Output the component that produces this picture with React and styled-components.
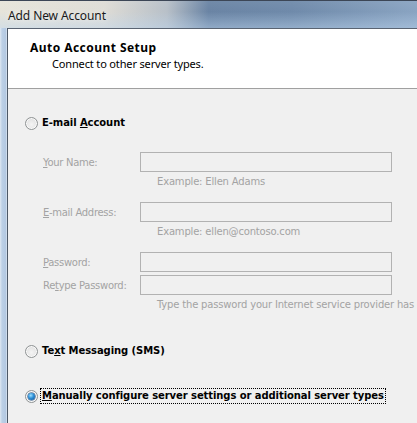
import React from "react";
import styled, { createGlobalStyle } from "styled-components";

const Global = createGlobalStyle`
  html, body { margin: 0; padding: 0; background: #f0f0f0; }
  body { width: 417px; height: 423px; overflow: hidden; }
`;

const Window = styled.div`
  width: 417px;
  height: 423px;
  display: flex;
  flex-direction: column;
  overflow: hidden;
`;

const TitleBar = styled.div`
  height: 28px;
  box-sizing: border-box;
  padding: 2px 0 0 8px;
  display: flex;
  align-items: center;
  font-family: "Segoe UI", "Noto Sans", "Open Sans", sans-serif;
  font-size: 12px;
  letter-spacing: -0.1px;
  color: #1a1a1a;
  border-top: 1px solid #3c4656;
  background:
    linear-gradient(to bottom, rgba(255,255,255,0.05) 0%, rgba(255,255,255,0) 40%, rgba(190,215,240,0.45) 100%),
    linear-gradient(to right, #e6e4da 0%, #dedcd6 25%, #b8c0c8 40%, #6a84a4 50%, #6f8aaa 70%, #8aa4c2 100%);
  text-shadow: 0 0 6px rgba(255,255,255,0.9);
`;

const Body = styled.div`
  flex: 1;
  display: flex;
  min-height: 0;
`;

const Frame = styled.div`
  width: 7px;
  border-right: 1px solid #4d5866;
  background: linear-gradient(to right, #dfe8f2 0%, #bcd0e6 30%, #b4c9e2 80%, #dbe6f2 100%);
`;

const Content = styled.div`
  flex: 1;
  display: flex;
  flex-direction: column;
  min-width: 0;
  background: #f0f0f0;
`;

const Header = styled.div`
  height: 61px;
  box-sizing: border-box;
  background: #fff;
  border-top: 1px solid #5a6472;
  border-bottom: 1px solid #a0a0a0;
  padding: 11px 0 0 22px;
  font-family: "Segoe UI", "Noto Sans", "Open Sans", sans-serif;
  color: #000;
`;

const HeaderTitle = styled.div`
  font-weight: bold;
  font-size: 12px;
  letter-spacing: 0.45px;
  line-height: 16px;
`;

const HeaderSub = styled.div`
  padding-left: 22px;
  font-size: 11px;
  letter-spacing: -0.15px;
  line-height: 15px;
`;

const Form = styled.div`
  padding: 26px 0 0 17px;
  font-family: "DejaVu Sans", Verdana, sans-serif;
  font-size: 10px;
`;

const RadioRow = styled.div`
  display: flex;
  align-items: center;
  height: 16px;
  margin-top: ${(p) => p.$mt || 0}px;
`;

const RadioCircle = styled.span`
  width: 11px;
  height: 11px;
  border-radius: 50%;
  border: 1px solid #8f9394;
  background: radial-gradient(circle at 50% 60%, #f4f4f4 0%, #e6e6e6 55%, #cfcfcf 100%);
  box-shadow: inset 0 0 0 1px #fafafa;
  display: flex;
  align-items: center;
  justify-content: center;
  flex: none;
  margin: 0 3px 0 0;
`;

const RadioDot = styled.span`
  width: 7px;
  height: 7px;
  border-radius: 50%;
  background: radial-gradient(circle at 40% 35%, #9fe0ff 0%, #2d8fd6 45%, #0d4a8c 100%);
  box-shadow: 0 0 0 0.5px #17477a;
`;

const RadioLabel = styled.span`
  font-weight: bold;
  color: #000;
  line-height: 14px;
  padding: 0 1px;
  letter-spacing: -0.08px;
  outline: ${(p) => (p.$focus ? "1px dotted #000" : "none")};
  outline-offset: 0px;
  white-space: nowrap;
`;

const Fields = styled.div`
  padding-left: 18px;
  margin-top: 21px;
  color: #a3a3a3;
`;

const FieldRow = styled.div`
  display: grid;
  grid-template-columns: 97px 252px;
  align-items: center;
  height: 20px;
  margin-top: ${(p) => p.$mt || 0}px;
`;

const FieldLabel = styled.span`
  color: #a3a3a3;
  letter-spacing: -0.3px;
  white-space: nowrap;
`;

const Input = styled.div`
  height: 20px;
  box-sizing: border-box;
  border: 1px solid #b2b2b2;
  background: #f0f0f0;
`;

const Hint = styled.div`
  margin-top: 3px;
  height: 14px;
  line-height: 14px;
  padding-left: 114px;
  color: #a3a3a3;
  letter-spacing: -0.18px;
  white-space: nowrap;
`;

const U = styled.span`
  text-decoration: underline;
`;

export default function App() {
  return (
    <>
      <Global />
      <Window>
        <TitleBar>Add New Account</TitleBar>
        <Body>
          <Frame />
          <Content>
            <Header>
              <HeaderTitle>Auto Account Setup</HeaderTitle>
              <HeaderSub>Connect to other server types.</HeaderSub>
            </Header>
            <Form>
              <RadioRow>
                <RadioCircle />
                <RadioLabel>
                  E-mail <U>A</U>ccount
                </RadioLabel>
              </RadioRow>
              <Fields>
                <FieldRow>
                  <FieldLabel>
                    <U>Y</U>our Name:
                  </FieldLabel>
                  <Input />
                </FieldRow>
                <Hint>Example: Ellen Adams</Hint>
                <FieldRow $mt={13}>
                  <FieldLabel>
                    <U>E</U>-mail Address:
                  </FieldLabel>
                  <Input />
                </FieldRow>
                <Hint>Example: ellen@contoso.com</Hint>
                <FieldRow $mt={13}>
                  <FieldLabel>
                    <U>P</U>assword:
                  </FieldLabel>
                  <Input />
                </FieldRow>
                <FieldRow $mt={3}>
                  <FieldLabel>
                    Re<U>t</U>ype Password:
                  </FieldLabel>
                  <Input />
                </FieldRow>
                <Hint>Type the password your Internet service provider has given you.</Hint>
              </Fields>
              <RadioRow $mt={31}>
                <RadioCircle />
                <RadioLabel>
                  Te<U>x</U>t Messaging (SMS)
                </RadioLabel>
              </RadioRow>
              <RadioRow $mt={29}>
                <RadioCircle>
                  <RadioDot />
                </RadioCircle>
                <RadioLabel $focus>
                  <U>M</U>anually configure server settings or additional server types
                </RadioLabel>
              </RadioRow>
            </Form>
          </Content>
        </Body>
      </Window>
    </>
  );
}
